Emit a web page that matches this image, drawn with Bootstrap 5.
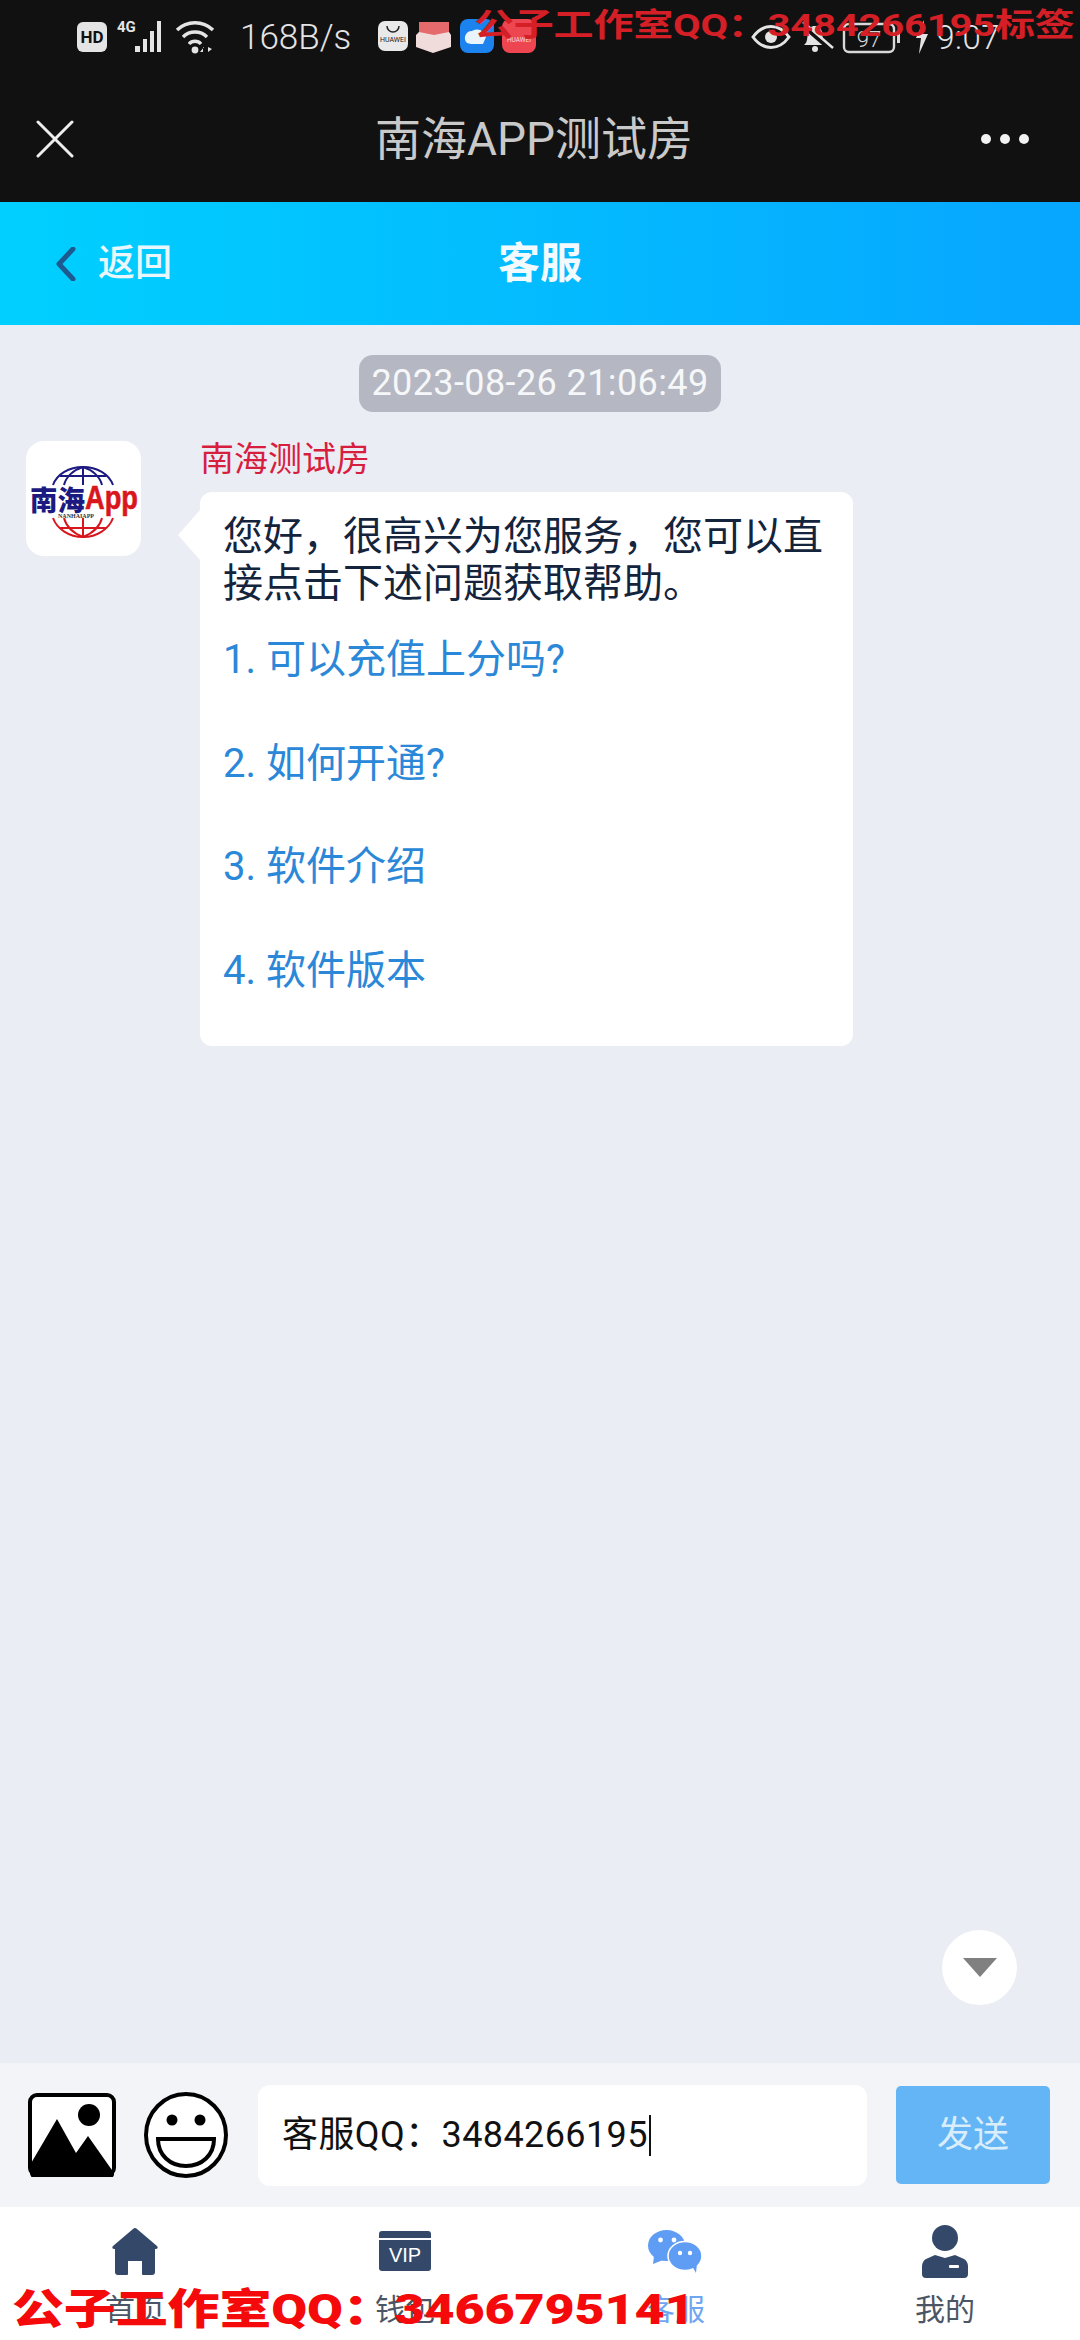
<!DOCTYPE html>
<html lang="zh">
  <head>
    <meta charset="utf-8" />
    <title>客服</title>
    <meta name="viewport" content="width=device-width, initial-scale=1" />
    <link href="https://cdn.jsdelivr.net/npm/bootstrap@5.3.2/dist/css/bootstrap.min.css" rel="stylesheet" />
    <script src="https://cdn.jsdelivr.net/npm/bootstrap@5.3.2/dist/js/bootstrap.bundle.min.js"></script>
    <style>
      html, body { height: 2340px; overflow: hidden; }
      body { font-family: Roboto, "Noto Sans CJK SC", sans-serif; background: #ebedf5; }
      .page-wrap { height: 2340px; }
      .status-bar { height: 76px; background: #111112; color: #e4e4e4; padding: 14px 80px 0 77px; }
      .status-speed { font-size: 35px; font-weight: 300; margin-left: 25px; margin-right: 27px; line-height: 48px; }
      .status-time { font-size: 33px; font-weight: 300; line-height: 48px; margin-left: 6px; letter-spacing: .5px; }
      .app-bar { height: 126px; background: #111112; padding: 0 50px 0 36px; }
      .app-title { font-size: 46px; color: #c9c9c9; line-height: 1; margin-left: 14px; }
      .head-bar { height: 123px; background: linear-gradient(90deg, #00d0ff, #07a6ff); padding-left: 55px; }
      .back-label { font-size: 37px; font-weight: 500; color: #e9f6fb; margin-left: 22px; width: 400px; }
      .head-title { font-size: 42px; font-weight: 700; color: #f2fafd; }
      .msg-area { padding-top: 30px; }
      .date-pill { background: #b5b8c2; color: #f6f7f9; font-size: 36px; font-weight: 400; line-height: 57px; height: 57px; padding: 0 12px; border-radius: 14px; letter-spacing: .4px; }
      .msg-row { margin-top: 29px; padding-left: 26px; }
      .avatar-box { width: 115px; height: 115px; border-radius: 18px; background: #fff; margin-right: 59px; flex: none; }
      .sender-name { font-size: 34px; line-height: 36px; color: #d81e3e; margin-bottom: 15px; }
      .msg-bubble { width: 653px; height: 554px; background: #fff; border-radius: 12px; padding: 21px 18px 0 23px; color: #14243c; font-size: 40px; line-height: 47px; }
      .msg-bubble::before { content: ""; position: absolute; left: -22px; top: 18px; border: 25px solid transparent; border-left: 0; border-right: 22px solid #fff; }
      .msg-intro { margin-bottom: 29px; }
      .msg-link { display: block; color: #2b88d8; text-decoration: none; margin-bottom: 56.5px; }
      .to-bottom { right: 63px; bottom: 335px; width: 75px; height: 75px; background: #fff; }
      .to-bottom::before { content: ""; border-style: solid; border-width: 19px 17px 0; border-color: #808080 transparent transparent; }
      .input-bar { height: 144px; background: #f3f4f7; padding: 0 29px 0 28px; }
      .pic-btn { margin-right: 28px; }
      .emoji-btn { margin-right: 30px; }
      .input-box { width: 609px; height: 101px; background: #fff; border-radius: 12px; padding-left: 24px; font-size: 36px; letter-spacing: .4px; color: #111; margin-right: 29px; }
      .caret-bar { width: 2px; height: 41px; background: #111; margin-left: 1px; }
      .send-btn { width: 154px; height: 98px; background: #64b5f6; border: 0; border-radius: 5px; color: #d9edfb; font-size: 36px; padding: 0; }
      .tab-bar { height: 133px; background: #fff; }
      .tab-item { height: 133px; }
      .tab-icon { height: 56px; margin-top: 16px; }
      .tab-label { font-size: 30px; line-height: 38px; color: #4c5566; margin-top: 12px; }
      .tab-on { color: #6ea6f2; }
      .mark-top { left: 474px; top: 6px; color: #d41f26; font-size: 40px; font-weight: 700; line-height: 50px; white-space: nowrap; transform: scaleY(.8); transform-origin: left top; letter-spacing: -.2px; }
      .mark-bottom { left: 12px; top: 2285px; color: #f40a0a; font-size: 52px; font-weight: 900; line-height: 64px; white-space: nowrap; transform: scaleY(.8); transform-origin: left top; letter-spacing: -.15px; }
      .logo-cn { font-family: "Noto Sans CJK SC", sans-serif; font-weight: 900; }
    </style>
  </head>
  <body>
    <div class="page-wrap d-flex flex-column position-relative">
      <!-- status bar -->
      <div class="status-bar d-flex align-items-start flex-shrink-0">
        <svg width="30" height="30" viewBox="0 0 30 30" class="mt-2"><rect width="30" height="30" rx="6" fill="#e4e4e4"/><text x="15" y="21" font-size="17" font-weight="700" text-anchor="middle" fill="#111" font-family="Roboto">HD</text></svg>
        <svg width="100" height="40" viewBox="0 0 100 40" class="ms-2 mt-1">
          <text x="2" y="14" font-size="15" font-weight="700" fill="#e4e4e4" font-family="Roboto">4G</text>
          <g fill="#e4e4e4"><rect x="20" y="28" width="5" height="6"/><rect x="28" y="21" width="4" height="13"/><rect x="35" y="13" width="4" height="21"/><rect x="42" y="3" width="4" height="31"/></g>
          <g fill="none" stroke="#e4e4e4" stroke-width="3.4"><path d="M62 12a26 26 0 0 1 36 0"/><path d="M68 19a17 17 0 0 1 24 0"/><path d="M74 26a8 8 0 0 1 12 0"/></g>
          <circle cx="80" cy="32" r="3.4" fill="#e4e4e4"/>
          <path d="M89 29l-4 5h3v-5zM93 29v5l4-3z" fill="#e4e4e4"/>
        </svg>
        <span class="status-speed">168B/s</span>
        <svg width="160" height="38" viewBox="0 0 160 38" class="mt-1">
          <rect x="0" y="3" width="30" height="30" rx="7" fill="#e9e9e9"/><path d="M9 8a6 6 0 0 0 12 0" fill="none" stroke="#222" stroke-width="1.5"/><text x="15" y="24" font-size="7" text-anchor="middle" fill="#222" font-family="Roboto">HUAWEI</text>
          <path d="M41 4h30v10l2 3v12l-18 6-17-6V17l3-3z" fill="#f1dcdc"/><path d="M41 4h30v10l-15 3-15-3z" fill="#e46a6c"/>
          <rect x="82" y="1" width="34" height="34" rx="8" fill="#1b82ee"/><path d="M89 25a7 7 0 0 1 5-12 9 9 0 0 1 14 6l-3 7H93z" fill="#e9f4fd"/>
          <rect x="124" y="1" width="34" height="34" rx="8" fill="#ee4650"/><text x="141" y="24" font-size="6.5" text-anchor="middle" fill="#fbdada" font-family="Roboto">HUAWEI</text>
        </svg>
        <div class="flex-grow-1"></div>
        <svg width="163" height="38" viewBox="0 0 163 38" class="mt-1">
          <path d="M2 19c10-14 26-14 36 0-10 14-26 14-36 0z" fill="none" stroke="#e4e4e4" stroke-width="3"/><circle cx="20" cy="19" r="6" fill="#e4e4e4"/>
          <path d="M53 27c4-3 3-8 4-13 1-8 12-8 14 0 1 5 0 10 4 13z" fill="#e4e4e4"/><circle cx="64" cy="31" r="3" fill="#e4e4e4"/><path d="M50 6l30 26" stroke="#111112" stroke-width="4"/><path d="M52 4l30 26" stroke="#e4e4e4" stroke-width="2.4"/>
          <rect x="93" y="6" width="50" height="28" rx="5" fill="none" stroke="#d8d8d8" stroke-width="2.4"/><rect x="146" y="15" width="3" height="10" fill="#d8d8d8"/>
          <text x="118" y="29" font-size="22" font-weight="300" text-anchor="middle" fill="#d8d8d8" font-family="Roboto">97</text>
        </svg>
        <svg width="16" height="38" viewBox="0 0 16 38" class="mt-1"><path d="M10 2 2 20h5L5 36l9-20H9z" fill="#e4e4e4"/></svg>
        <span class="status-time">9:07</span>
      </div>

      <!-- webview title bar -->
      <div class="app-bar d-flex align-items-center justify-content-between flex-shrink-0">
        <svg width="38" height="38" viewBox="0 0 38 38"><path d="M2 2l34 34M36 2 2 36" stroke="#eee" stroke-width="3" stroke-linecap="round"/></svg>
        <div class="app-title">南海APP测试房</div>
        <svg width="50" height="12" viewBox="0 0 50 12" fill="#f2f2f2"><circle cx="6" cy="6" r="5"/><circle cx="25" cy="6" r="5"/><circle cx="44" cy="6" r="5"/></svg>
      </div>

      <!-- page header -->
      <div class="head-bar d-flex align-items-center flex-shrink-0">
        <svg width="21" height="34" viewBox="0 0 21 34"><path d="M18 2 4 17l14 15" fill="none" stroke="#1d5a90" stroke-width="5" stroke-linecap="round" stroke-linejoin="round"/></svg>
        <span class="back-label">返回</span>
        <span class="head-title">客服</span>
      </div>

      <!-- messages -->
      <div class="msg-area flex-grow-1 position-relative">
        <div class="text-center"><span class="date-pill d-inline-block">2023-08-26 21:06:49</span></div>
        <div class="msg-row d-flex align-items-start">
          <div class="avatar-box">
            <svg width="115" height="115" viewBox="0 0 115 115">
              <g fill="none" stroke="#1c1a80" stroke-width="2">
                <path d="M27 44C31 33 43 26 57 26s26 7 30 18"/><path d="M38 44c2-8 9-15 19-18 10 3 17 10 19 18"/><path d="M57 26v18"/><path d="M34 35h46"/>
              </g>
              <g fill="none" stroke="#d8161c" stroke-width="2">
                <path d="M27 77c4 11 16 19 30 19s26-8 30-19"/><path d="M38 77c2 8 9 15 19 19 10-4 17-11 19-19"/><path d="M57 77v19"/><path d="M34 87h46"/>
              </g>
              <text x="4" y="70" font-size="28" class="logo-cn" fill="#1c1a80" textLength="55" lengthAdjust="spacingAndGlyphs">南海</text>
              <text x="59" y="68" font-size="33" font-weight="700" fill="#d8161c" font-family="Liberation Sans" stroke="#d8161c" stroke-width=".6" textLength="53" lengthAdjust="spacingAndGlyphs">App</text>
              <text x="32" y="77" font-size="6" font-weight="700" fill="#333" font-family="Liberation Serif">NANHAIAPP</text>
            </svg>
          </div>
          <div>
            <div class="sender-name">南海测试房</div>
            <div class="msg-bubble position-relative">
              <div class="msg-intro">您好，很高兴为您服务，您可以直接点击下述问题获取帮助。</div>
              <a class="msg-link" href="#">1. 可以充值上分吗?</a>
              <a class="msg-link" href="#">2. 如何开通?</a>
              <a class="msg-link" href="#">3. 软件介绍</a>
              <a class="msg-link" href="#">4. 软件版本</a>
            </div>
          </div>
        </div>
      </div>
      <div class="to-bottom position-absolute rounded-circle d-flex align-items-center justify-content-center"></div>

      <!-- input -->
      <div class="input-bar d-flex align-items-center flex-shrink-0">
        <svg class="pic-btn" width="88" height="84" viewBox="0 0 88 84">
          <rect x="2" y="2" width="84" height="80" rx="7" fill="#fff" stroke="#000" stroke-width="4"/>
          <path d="M2 72 29 26l19 34 12-17 26 37v2a6 6 0 0 1-6 4H8a6 6 0 0 1-6-6z" fill="#000"/>
          <circle cx="61" cy="22" r="11" fill="#000"/>
        </svg>
        <svg class="emoji-btn" width="84" height="86" viewBox="0 0 84 86">
          <ellipse cx="42" cy="43" rx="40" ry="41" fill="#fff" stroke="#000" stroke-width="4"/>
          <circle cx="28" cy="28" r="5.5" fill="#000"/><circle cx="56" cy="28" r="5.5" fill="#000"/>
          <path d="M14 47h56c0 16-12 27-28 27S14 63 14 47z" fill="#fff" stroke="#000" stroke-width="4"/>
        </svg>
        <div class="input-box d-flex align-items-center"><span>客服QQ：3484266195</span><span class="caret-bar"></span></div>
        <button type="button" class="send-btn">发送</button>
      </div>

      <!-- tabs -->
      <div class="tab-bar row g-0 flex-shrink-0">
        <div class="col-3 tab-item d-flex flex-column align-items-center">
          <div class="tab-icon d-flex align-items-center"><svg width="46" height="47" viewBox="0 0 46 47"><path d="M21 1a3 3 0 0 1 4 0l20 17c1 1 1 3-1 3h-1v23a3 3 0 0 1-3 3h-9a1 1 0 0 1-1-1V33h-14v13a1 1 0 0 1-1 1H6a3 3 0 0 1-3-3V21H2c-2 0-2-2-1-3z" fill="#34496a"/></svg></div>
          <div class="tab-label">首页</div>
        </div>
        <div class="col-3 tab-item d-flex flex-column align-items-center">
          <div class="tab-icon d-flex align-items-center"><svg width="52" height="40" viewBox="0 0 52 40"><path d="M3 0h46a3 3 0 0 1 3 3v4H0V3a3 3 0 0 1 3-3z" fill="#34496a"/><path d="M0 9h52v28a3 3 0 0 1-3 3H3a3 3 0 0 1-3-3z" fill="#34496a"/><text x="26" y="31" font-size="20" text-anchor="middle" fill="#fff" font-family="Liberation Sans">VIP</text></svg></div>
          <div class="tab-label">钱包</div>
        </div>
        <div class="col-3 tab-item d-flex flex-column align-items-center">
          <div class="tab-icon d-flex align-items-center"><svg width="54" height="43" viewBox="0 0 54 43">
            <ellipse cx="18.5" cy="15.5" rx="18.5" ry="15.5" fill="#5f9cf4"/><path d="M6 26l-1 8 10-4z" fill="#5f9cf4"/>
            <ellipse cx="37" cy="26" rx="17" ry="14.5" fill="#5f9cf4" stroke="#fff" stroke-width="1.6"/><path d="M44 36l4 7 1-10z" fill="#5f9cf4"/>
            <g fill="#fff"><circle cx="12.5" cy="10" r="2.4"/><circle cx="26" cy="10" r="2.4"/><circle cx="32" cy="23" r="2.2"/><circle cx="42" cy="23" r="2.2"/></g>
          </svg></div>
          <div class="tab-label tab-on">客服</div>
        </div>
        <div class="col-3 tab-item d-flex flex-column align-items-center">
          <div class="tab-icon d-flex align-items-center"><svg width="46" height="53" viewBox="0 0 46 53"><circle cx="23" cy="13" r="13" fill="#34496a"/><path d="M13 30l10 3 10-3 9 4c2 1 4 4 4 7v8a4 4 0 0 1-4 4H4a4 4 0 0 1-4-4v-8c0-3 2-6 4-7z" fill="#34496a"/><rect x="27" y="40" width="10" height="3" rx="1" fill="#fff"/></svg></div>
          <div class="tab-label">我的</div>
        </div>
      </div>

      <!-- overlays: watermarks on top of the screenshot -->
      <div class="mark-top position-absolute">公子工作室QQ：3484266195标签</div>
      <div class="mark-bottom position-absolute">公子工作室QQ：3466795141</div>
    </div>
  </body>
</html>
